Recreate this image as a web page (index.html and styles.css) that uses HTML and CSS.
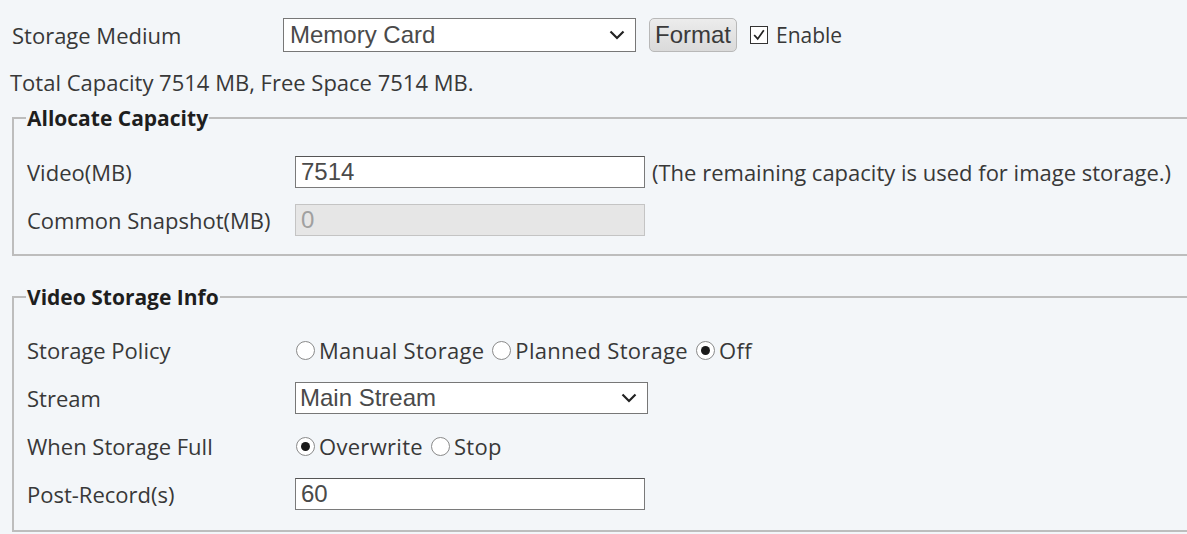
FILE: index.html
```html
<!DOCTYPE html>
<html lang="en">
<head>
    <meta charset="UTF-8">
    <meta name="viewport" content="width=device-width, initial-scale=1.0">
    <title>Storage</title>
    <link rel="stylesheet" href="styles.css">
</head>
<body>

<div class="page">
    <div class="top-row">
        <span class="label">Storage Medium</span>
        <div class="select medium">
            <span>Memory Card</span>
            <svg class="chevron" viewBox="0 0 16 10" width="16" height="10"><path d="M1.5 1.5 L8 8 L14.5 1.5" fill="none" stroke="#222" stroke-width="2.2"/></svg>
        </div>
        <button class="btn">Format</button>
        <span class="check">
            <svg viewBox="0 0 16 16" width="14" height="14"><path d="M2.5 8 L6.5 12.5 L13.5 2.5" fill="none" stroke="#222" stroke-width="2"/></svg>
        </span>
        <span class="check-text">Enable</span>
    </div>

    <div class="capacity">Total Capacity 7514 MB, Free Space 7514 MB.</div>

    <fieldset class="group">
        <legend>Allocate Capacity</legend>
        <div class="row">
            <span class="label">Video(MB)</span>
            <div class="field">
                <div class="input">7514</div>
                <span class="hint">(The remaining capacity is used for image storage.)</span>
            </div>
        </div>
        <div class="row">
            <span class="label">Common Snapshot(MB)</span>
            <div class="field">
                <div class="input disabled">0</div>
            </div>
        </div>
    </fieldset>

    <fieldset class="group second">
        <legend>Video Storage Info</legend>
        <div class="row">
            <span class="label">Storage Policy</span>
            <div class="field radios">
                <span class="radio"></span><span class="opt">Manual Storage</span>
                <span class="radio"></span><span class="opt">Planned Storage</span>
                <span class="radio on"></span><span class="opt">Off</span>
            </div>
        </div>
        <div class="row">
            <span class="label">Stream</span>
            <div class="field">
                <div class="select stream">
                    <span>Main Stream</span>
                    <svg class="chevron" viewBox="0 0 16 10" width="16" height="10"><path d="M1.5 1.5 L8 8 L14.5 1.5" fill="none" stroke="#222" stroke-width="2.2"/></svg>
                </div>
            </div>
        </div>
        <div class="row">
            <span class="label">When Storage Full</span>
            <div class="field radios">
                <span class="radio on"></span><span class="opt">Overwrite</span>
                <span class="radio"></span><span class="opt">Stop</span>
            </div>
        </div>
        <div class="row">
            <span class="label">Post-Record(s)</span>
            <div class="field">
                <div class="input">60</div>
            </div>
        </div>
    </fieldset>
</div>

</body>
</html>
```

FILE: styles.css
```css
body {
    margin: 0;
    background: #f3f6f9;
    font-family: 'Open Sans', 'Noto Sans', sans-serif;
    font-size: 22px;
    color: #383838;
    overflow: hidden;
}
.page {
    padding: 18px 0 0 12px;
}
.top-row {
    display: flex;
    align-items: center;
    height: 34px;
}
.top-row .label {
    width: 271px;
    flex-shrink: 0;
}
.label {
    line-height: 28px;
}
.select {
    display: flex;
    align-items: center;
    justify-content: space-between;
    box-sizing: border-box;
    height: 34px;
    padding: 0 10px 0 6px;
    background: #fff;
    border: 1px solid #777;
    font-family: 'Liberation Sans', Arial, sans-serif;
    font-size: 24px;
    color: #4a4a4a;
}
.select.medium {
    width: 353px;
    flex-shrink: 0;
}
.select.stream {
    width: 353px;
    height: 32px;
    padding-left: 4px;
}
.chevron {
    display: block;
}
.btn {
    flex-shrink: 0;
    margin-left: 13px;
    height: 34px;
    width: 88px;
    padding: 0;
    border: 1px solid #b8b8b8;
    border-radius: 5px;
    background: linear-gradient(#ececec, #dadada);
    font-family: 'Liberation Sans', Arial, sans-serif;
    font-size: 24px;
    color: #3a3a3a;
}
.check {
    display: flex;
    align-items: center;
    justify-content: center;
    box-sizing: border-box;
    width: 18px;
    height: 18px;
    margin-left: 13px;
    background: #fff;
    border: 1px solid #333;
}
.check-text {
    margin-left: 8px;
    font-size: 21px;
}
.capacity {
    margin-top: 16px;
    margin-left: -2px;
    line-height: 28px;
}
.group {
    margin: 8px -30px 0 0;
    padding: 16px 0 10px 13px;
    border: 2px solid #bdbdbd;
    min-width: 0;
}
.group.second {
    margin-top: 27px;
    padding-top: 15px;
    padding-bottom: 12px;
}
.group legend {
    margin-left: -1px;
    padding: 0 1px;
    font-weight: bold;
    font-size: 21px;
    line-height: 28px;
    color: #1e1e1e;
}
.row {
    display: flex;
    align-items: center;
    height: 48px;
}
.row .label {
    width: 268px;
    flex-shrink: 0;
}
.field {
    display: flex;
    align-items: center;
}
.input {
    box-sizing: border-box;
    width: 350px;
    height: 32px;
    padding: 0 5px;
    line-height: 30px;
    background: #fff;
    border: 1px solid #7a7a7a;
    border-top-color: #555;
    font-family: 'Liberation Sans', Arial, sans-serif;
    font-size: 24px;
    color: #4a4a4a;
}
.input.disabled {
    background: #e6e6e6;
    border-color: #c4c4c4;
    color: #a0a0a0;
}
.hint {
    margin-left: 7px;
}
.radios {
    padding-left: 1px;
}
.radio {
    position: relative;
    box-sizing: border-box;
    width: 19px;
    height: 19px;
    border: 1px solid #8a8a8a;
    border-radius: 50%;
    background: #fff;
    margin-right: 4px;
}
.radio.on::after {
    content: "";
    position: absolute;
    left: 4px;
    top: 4px;
    width: 9px;
    height: 9px;
    border-radius: 50%;
    background: #1a1a1a;
}
.opt {
    margin-right: 8px;
    letter-spacing: 0.3px;
}
```
